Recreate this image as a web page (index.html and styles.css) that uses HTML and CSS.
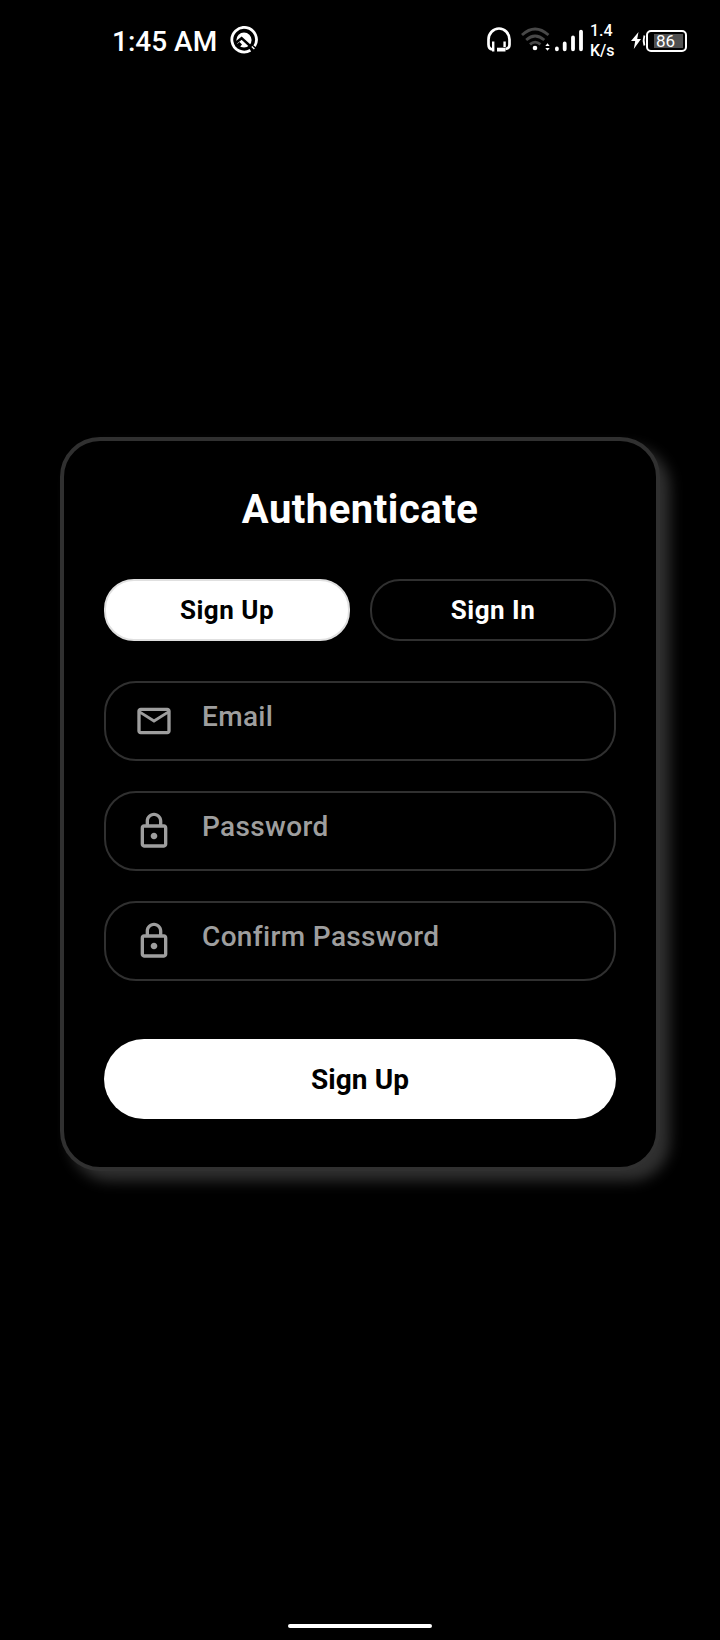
FILE: index.html
```html
<!DOCTYPE html>
<html lang="en">
<head>
<meta charset="utf-8">
<title>Authenticate</title>
<link rel="stylesheet" href="styles.css">
</head>
<body>
<div class="screen">
  <header class="status">
    <span class="clock">1:45 AM</span>
    <svg class="badge" width="28" height="28" viewBox="0 0 28 28">
      <path d="M20.4 24.3A12.3 12.3 0 1 1 24.6 20.2" fill="none" stroke="#fff" stroke-width="2.8"/>
      <circle cx="14" cy="14" r="7.600" fill="#fff"/>
      <path d="M5 17.500L11.600 12.200L24.500 24" fill="none" stroke="#000" stroke-width="2.500"/>
      <path d="M5 20L9.500 16L12 18.500L9 22Z" fill="#000"/>
      <path d="M21.800 20.400L24.400 23" stroke="#fff" stroke-width="1.400"/>
    </svg>
    <svg class="headset" width="24" height="26" viewBox="0 0 24 26">
      <path d="M5.500 22.500Q1.500 22 1.500 17.500V12.500A10.500 11 0 0 1 22.500 12.500V17.500Q22.500 21.500 18.500 22" fill="none" stroke="#fff" stroke-width="2.700"/>
      <path d="M6.200 14.500V24.500M17.600 14.500V20" stroke="#fff" stroke-width="2.400"/>
      <path d="M10 20.700H18.500V24.500H10Z" fill="#fff"/>
    </svg>
    <svg class="wifi" width="30" height="26" viewBox="0 0 30 26">
      <g fill="none" stroke="#484848" stroke-width="2.8">
        <path d="M1 8Q14 -4 27.5 8"/><path d="M5.2 13Q14 5 23.3 13"/><path d="M9 17.4Q14 12.8 19.5 17.4"/>
      </g>
      <circle cx="14" cy="21" r="2.3" fill="#fff"/>
      <path d="M24.3 19L26.5 16.2L28.7 19ZM24.3 21L26.5 23.8L28.7 21Z" fill="#fff"/>
    </svg>
    <svg class="signal" width="30" height="24" viewBox="0 0 30 24">
      <g stroke="#fff" stroke-width="3.8" stroke-linecap="round">
        <path d="M2.9 19.4V20.3M10.7 14.4V20.3M19 8.4V20.3M27 2.6V20.3"/>
      </g>
    </svg>
    <span class="rate">1.4<br>K/s</span>
    <svg class="bolt" width="15" height="17" viewBox="0 0 15 17">
      <path d="M7.500 0L0 9H4.200L2.800 17L10 7H6.200Z" fill="#fff"/>
      <path d="M13.400 3.500Q11.900 8.500 13.400 13.500" fill="none" stroke="#fff" stroke-width="1.800"/>
    </svg>
    <span class="battery"><span class="level">86</span></span>
  </header>

  <main class="card">
    <h1 class="title">Authenticate</h1>
    <div class="tabs">
      <button class="tab tab-active">Sign Up</button>
      <button class="tab">Sign In</button>
    </div>
    <div class="fields">
      <div class="field">
        <svg class="icon" width="40" height="40" viewBox="0 0 24 24"><path d="M22 6c0-1.100-.9-2-2-2H4c-1.100 0-2 .9-2 2v12c0 1.100.9 2 2 2h16c1.100 0 2-.9 2-2V6zm-2 0-8 5-8-5h16zm0 12H4V8l8 5 8-5v10z"/></svg>
        <span class="label">Email</span>
      </div>
      <div class="field">
        <svg class="icon" width="40" height="40" viewBox="0 0 24 24"><path d="M18 8h-1V6c0-2.760-2.240-5-5-5S7 3.240 7 6v2H6c-1.100 0-2 .9-2 2v10c0 1.100.9 2 2 2h12c1.100 0 2-.9 2-2V10c0-1.100-.9-2-2-2zM9 6c0-1.660 1.340-3 3-3s3 1.340 3 3v2H9V6zm9 14H6V10h12v10zm-6-3c1.100 0 2-.9 2-2s-.9-2-2-2-2 .9-2 2 .9 2 2 2z"/></svg>
        <span class="label">Password</span>
      </div>
      <div class="field">
        <svg class="icon" width="40" height="40" viewBox="0 0 24 24"><path d="M18 8h-1V6c0-2.760-2.240-5-5-5S7 3.240 7 6v2H6c-1.100 0-2 .9-2 2v10c0 1.100.9 2 2 2h12c1.100 0 2-.9 2-2V10c0-1.100-.9-2-2-2zM9 6c0-1.660 1.340-3 3-3s3 1.340 3 3v2H9V6zm9 14H6V10h12v10zm-6-3c1.100 0 2-.9 2-2s-.9-2-2-2-2 .9-2 2 .9 2 2 2z"/></svg>
        <span class="label">Confirm Password</span>
      </div>
    </div>
    <button class="submit">Sign Up</button>
  </main>
  <div class="home-bar"></div>
</div>
</body>
</html>
```
FILE: styles.css
```css
* { box-sizing: border-box; }
body { margin: 0; background: #000; font-family: Roboto, sans-serif; color: #fff; }
button { font-family: inherit; padding: 0; }
.screen { width: 720px; height: 1640px; display: flex; flex-direction: column; overflow: hidden; background: #000; }
.status { display: flex; align-items: flex-start; height: 80px; padding-left: 112px; }
.status svg, .status span { flex-shrink: 0; }
.clock { width: 106px; margin-top: 25px; font-size: 28px; line-height: 33px; font-weight: 500; white-space: nowrap; }
.badge { margin: 26px 0 0 12px; }
.headset { margin: 27px 0 0 229px; }
.wifi { margin: 27px 0 0 10px; }
.signal { margin: 29px 0 0 3px; }
.rate { width: 28px; margin: 21px 0 0 6px; font-size: 16px; line-height: 19.500px; font-weight: 500; white-space: nowrap; }
.bolt { margin: 32px 0 0 13px; }
.battery { width: 41px; height: 22px; margin: 30px 0 0 0; border: 2px solid #fff; border-radius: 5px; padding: 2px 2px 2px 6px; }
.level { display: block; width: 29px; height: 14px; background: #505050; font-size: 17px; line-height: 15px; padding-left: 2px; }
.card { width: 600px; height: 734px; margin: 357px 0 0 60px; padding: 45px 40px 44px; border: 4px solid #303030; border-radius: 40px; background: #000; box-shadow: 10px 10px 14px #303030; display: flex; flex-direction: column; }
.title { margin: 0; height: 93px; font-size: 40px; line-height: 48px; font-weight: 700; text-align: center; letter-spacing: 0.5px; }
.tabs { display: grid; grid-template-columns: 1fr 1fr; gap: 20px; }
.tab { height: 62px; border: 2px solid #303030; border-radius: 30px; background: #000; color: #fff; font-size: 26px; font-weight: 700; letter-spacing: 0.5px; }
.tab-active { background: #fff; color: #000; border-color: #e0e0e0; }
.fields { display: flex; flex-direction: column; gap: 30px; margin-top: 40px; }
.field { display: flex; height: 80px; border: 2px solid #303030; border-radius: 32px; padding-left: 28px; }
.icon { margin-top: 18px; fill: #9e9e9e; }
.label { margin: 17px 0 0 28px; font-size: 28px; line-height: 33px; font-weight: 500; letter-spacing: 0.35px; color: #9e9e9e; }
.submit { height: 80px; margin-top: 58px; border: 0; border-radius: 40px; background: #fff; color: #000; font-size: 28px; font-weight: 700; letter-spacing: 0.1px; }
.home-bar { width: 144px; height: 4px; margin: 453px 0 0 288px; border-radius: 2px; background: #fff; }
```
